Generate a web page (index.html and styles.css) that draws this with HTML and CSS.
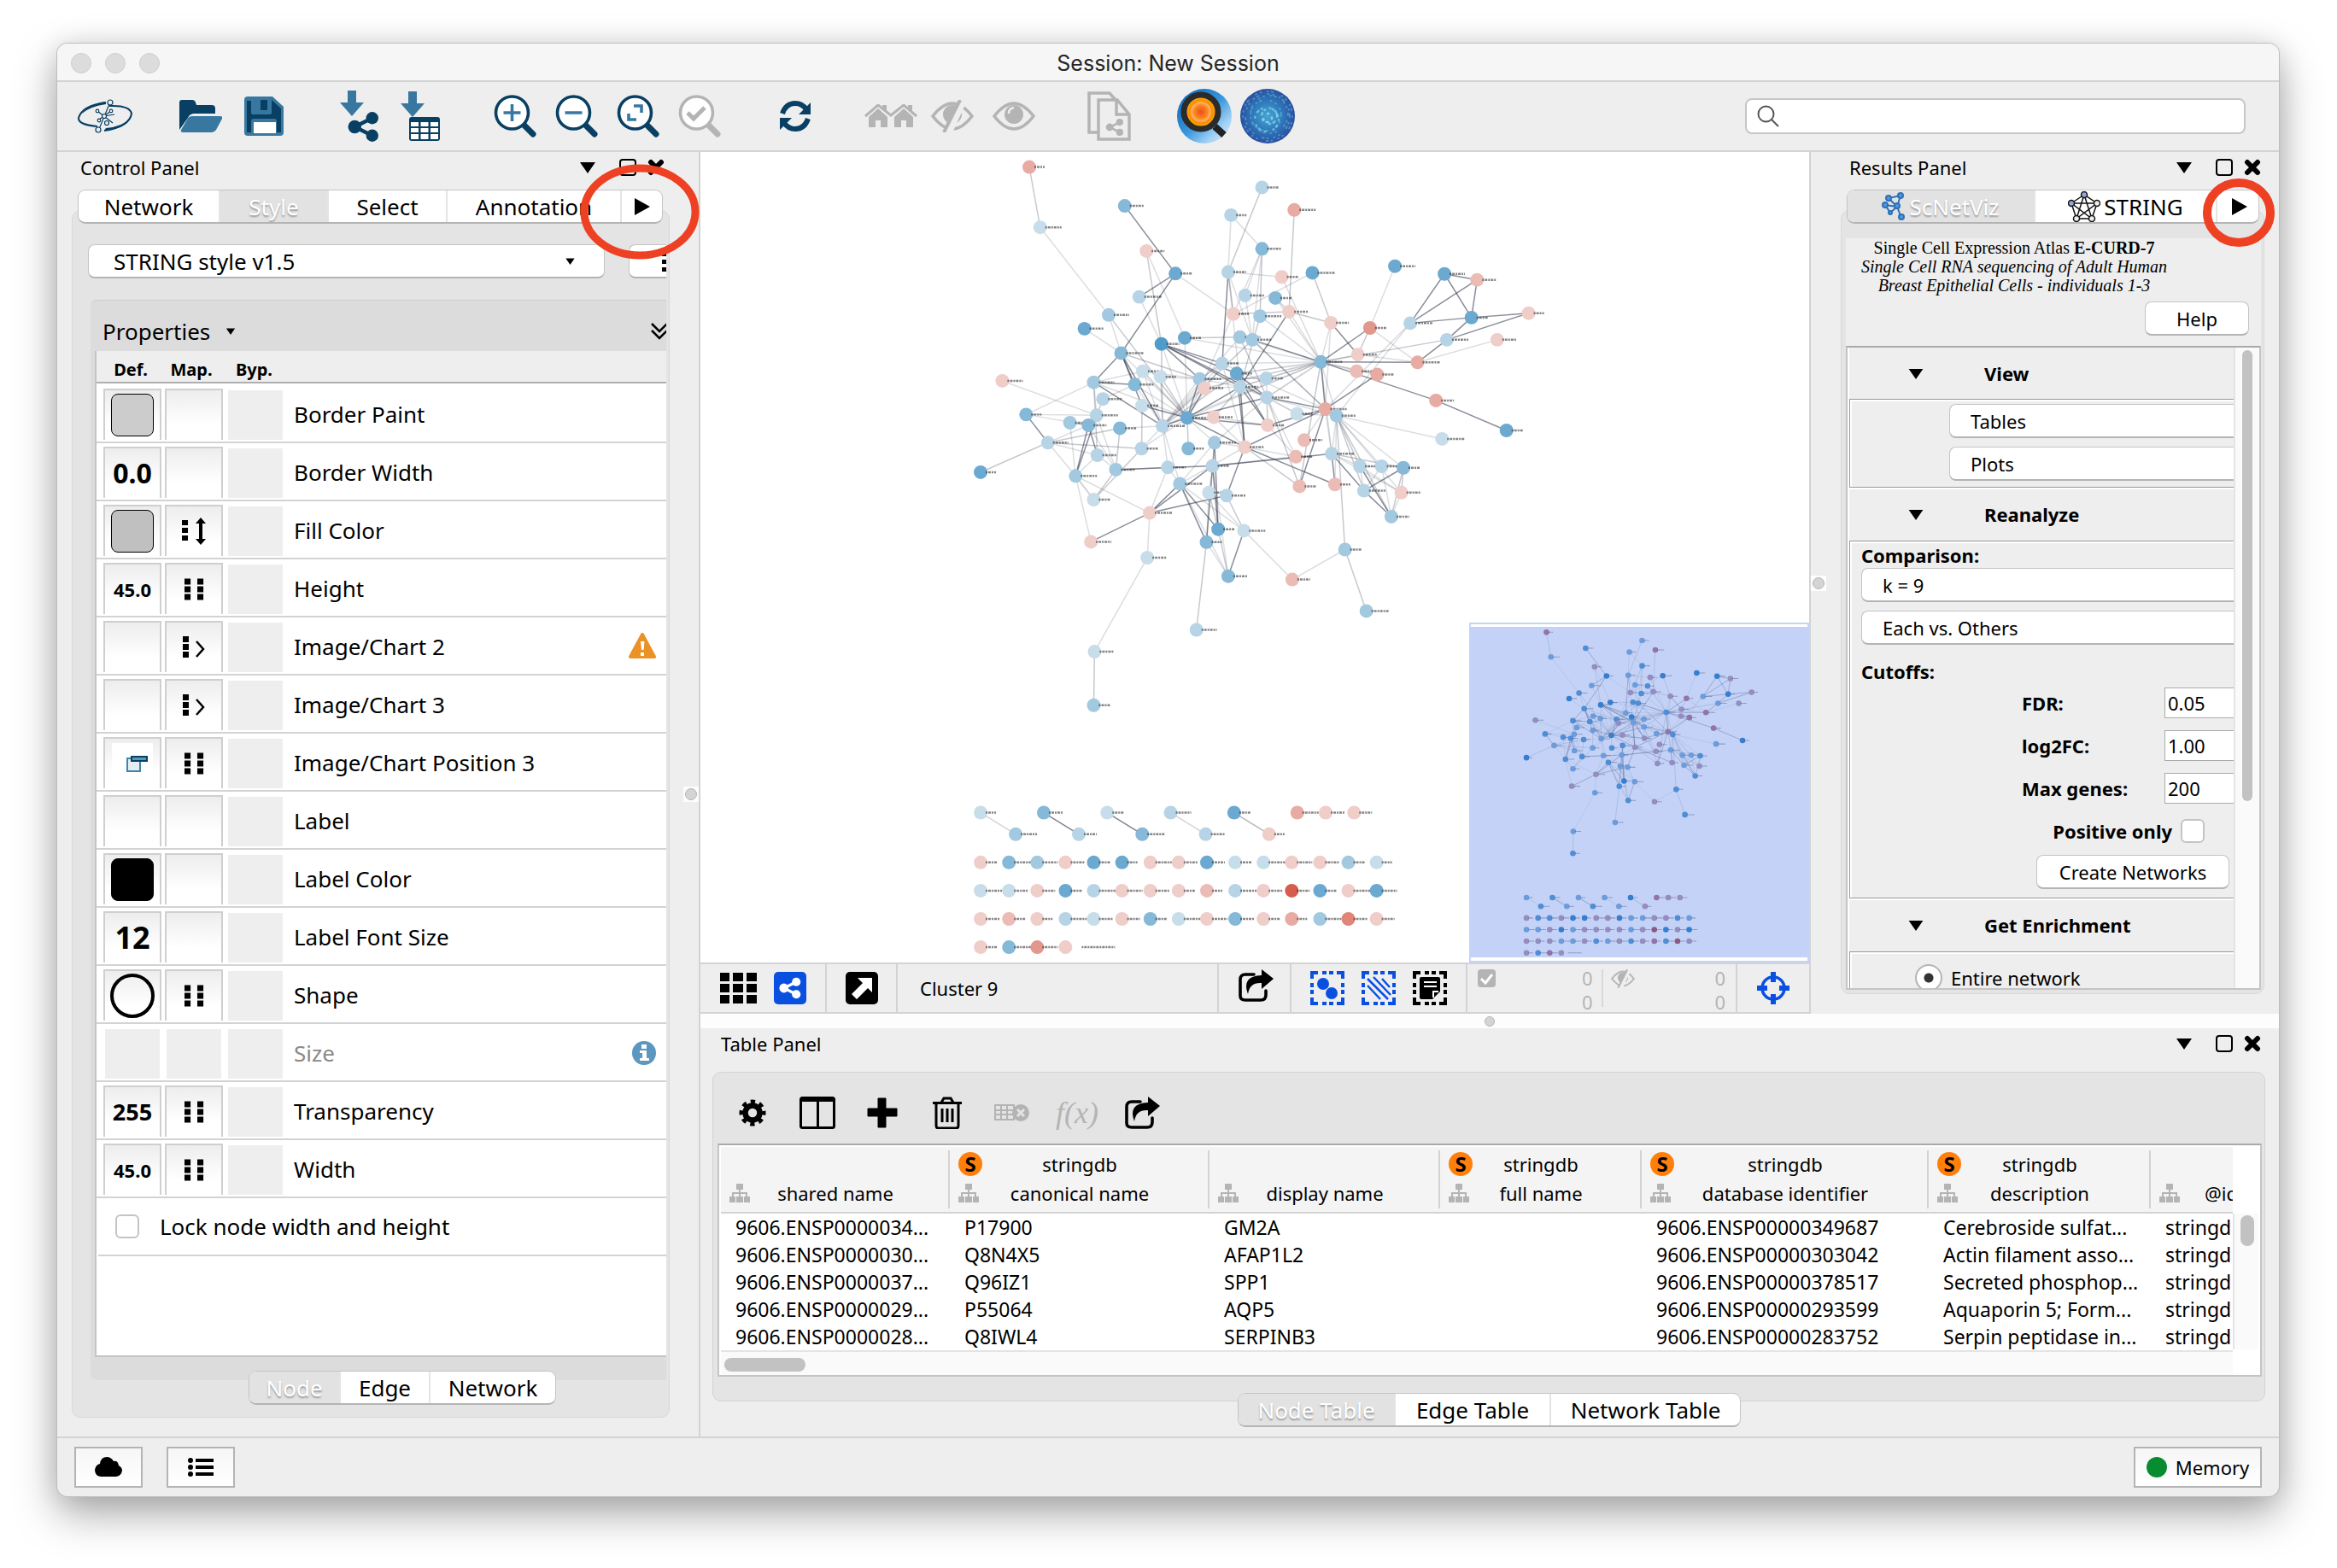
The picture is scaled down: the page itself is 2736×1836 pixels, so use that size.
FILE: index.html
```html
<!DOCTYPE html>
<html lang="en">
<head>
<meta charset="utf-8">
<title>Session: New Session</title>
<link rel="stylesheet" href="styles.css">
</head>
<body>
<svg class="defs" aria-hidden="true">
  <symbol id="i-down" viewBox="0 0 18 14"><path d="M0 1h18L9 14z"/></symbol>
  <symbol id="i-float" viewBox="0 0 20 20"><rect x="1" y="1" width="18" height="18" rx="3" fill="none" stroke="#000" stroke-width="2"/></symbol>
  <symbol id="i-close" viewBox="0 0 20 20"><path d="M4 4l12 12M16 4L4 16" stroke="#000" stroke-width="6" stroke-linecap="round"/></symbol>
  <symbol id="i-right" viewBox="0 0 18 20"><path d="M0 0l18 10L0 20z"/></symbol>
  <symbol id="i-dots2" viewBox="0 0 24 26"><path d="M4 4h.1M4 13h.1M4 22h.1M19 4h.1M19 13h.1M19 22h.1" stroke="#000" stroke-width="7" stroke-linecap="square" transform="translate(.5 0)"/></symbol>
  <symbol id="i-disc" viewBox="0 0 28 26"><path d="M1 0h7v7H1zM1 9h7v7H1zM1 18h7v7H1z"/><path d="M17 6l8 9-8 9" fill="none" stroke="#000" stroke-width="2.500"/></symbol>
  <symbol id="i-cont" viewBox="0 0 28 32"><path d="M0 3h7v6H0zM0 12h7v6H0zM0 21h7v6H0zM22 0l6 7h-4v18h4l-6 7-6-7h4V7h-4z"/></symbol>
  <symbol id="i-share" viewBox="0 0 36 34"><g fill="none" stroke="currentColor" stroke-width="4.500"><path d="M28 7L8 17l20 10"/></g><g fill="currentColor"><circle cx="28" cy="7" r="7"/><circle cx="8" cy="17" r="7.500"/><circle cx="28" cy="27" r="7"/></g></symbol>
  <symbol id="i-arrow" viewBox="0 0 28 30"><path d="M9 0h10v14h9L14 30 0 14h9z"/></symbol>
  <symbol id="i-lens" viewBox="0 0 50 50"><path d="M35 35l11 11" stroke="currentColor" stroke-width="7" stroke-linecap="round"/><circle cx="21.500" cy="21" r="19" fill="#fff" stroke="currentColor" stroke-width="3.600"/></symbol>
  <symbol id="i-export" viewBox="0 0 42 38"><path d="M19 6H9Q3 6 3 12v19q0 5 6 5h18q6 0 6-6v-5" fill="none" stroke="#000" stroke-width="3.600" stroke-linecap="round"/><path d="M28 0l14 11-14 12v-7q-14-1-16 13Q4 8 28 7z"/></symbol>
  <symbol id="i-eye" viewBox="0 0 50 34"><path d="M2 17Q25-13 48 17 25 47 2 17z" fill="none" stroke="#b4b4b4" stroke-width="3.500"/><circle cx="25" cy="15" r="11" fill="#b4b4b4"/><path d="M19 14q0-6 6-7" stroke="#eee" stroke-width="2.500" fill="none"/></symbol>
  <symbol id="i-eyeoff" viewBox="0 0 50 38"><path d="M2 19Q25-11 48 19 25 49 2 19z" fill="none" stroke="#b4b4b4" stroke-width="3.500"/><circle cx="25" cy="17" r="11" fill="#b4b4b4"/><path d="M38 0L20 40" stroke="#eee" stroke-width="8"/><path d="M34 0L15 38" stroke="#b4b4b4" stroke-width="4"/></symbol>
  <symbol id="i-tree" viewBox="0 0 24 22"><path d="M8 0h8v7h-3v3h8v5h3v7h-7v-7h2v-3h-6v3h3v7H8v-7h3v-3H5v3h2v7H0v-7h3v-5h8V7H8z" fill="#b4b4b4"/></symbol>
  <symbol id="i-dashbox" viewBox="0 0 40 40"><path d="M2 9V2h7M14 2h5M22 2h5M31 2h7v7M38 14v5M38 22v5M38 31v7h-7M27 38h-5M19 38h-5M9 38H2v-7M2 27v-5M2 19v-5" fill="none" stroke="currentColor" stroke-width="4"/></symbol>
</svg>

<div class="window">
  <header class="titlebar">
    <div class="lights"><i></i><i></i><i></i></div>
    <h1>Session: New Session</h1>
  </header>

  <div class="toolbar">
    <button class="tb tb-logo" aria-label="Cytoscape"><svg width="66" height="40" viewBox="0 0 66 40"><g fill="none" stroke="#083f63"><path d="M33 4Q6 8 2 22q-1 8 22 10" stroke-width="2"/><path d="M38 8q24-1 26 9-2 15-32 20" stroke-width="2"/><g stroke-width="1.200"><path d="M38 6L26 35M24 14l18 14M40 14L26 24M32 20l12-2"/></g></g><path d="M34 3Q12 7 6 17 14 9 34 6zM32 37q24-2 30-14-8 9-28 11z" fill="#083f63"/><g fill="#eee" stroke="#083f63" stroke-width="1.200"><circle cx="39" cy="4" r="3"/><circle cx="25" cy="36" r="3"/><circle cx="32" cy="20" r="2.500"/><circle cx="24" cy="14" r="1.800"/><circle cx="40" cy="14" r="1.800"/><circle cx="26" cy="25" r="1.800"/><circle cx="35" cy="28" r="2.500"/></g></svg></button>
    <button class="tb tb-open" aria-label="Open session"><svg width="50" height="40" viewBox="0 0 50 40"><path d="M0 36V4q0-3 3-3h12q3 0 4 3l1 3h18q4 0 4 4v6H18q-6 0-8 5z" fill="#083f63"/><path d="M15 20h33q3 0 2 3l-7 13q-2 3-5 3H4q-3 0-2-3l7-12q2-4 6-4z" fill="#3878a0"/></svg></button>
    <button class="tb" aria-label="Save session"><svg width="46" height="46" viewBox="0 0 46 46"><path d="M4 0h29l13 12v30q0 4-4 4H4q-4 0-4-4V4q0-4 4-4z" fill="#3878a0"/><path d="M3 5h5v14q0 2 2 2h20q2 0 2-2V4l11 10v28h-5V29q0-3-3-3H11q-3 0-3 3v13H3z" fill="#083f63"/><path d="M19 4h8v12h-8z" fill="#083f63"/><path d="M11 30h26v13H11z" fill="#fff"/></svg></button>
    <button class="tb tb-impnet" aria-label="Import network"><svg width="48" height="60" viewBox="0 0 48 60"><use href="#i-arrow" x="0" y="0" width="28" height="30" fill="#3878a0"/><use href="#i-share" x="9" y="25" width="37" height="35" color="#083f63"/></svg></button>
    <button class="tb" aria-label="Import table"><svg width="48" height="60" viewBox="0 0 48 60"><use href="#i-arrow" x="0" y="1" width="28" height="30" fill="#3878a0"/><rect x="10" y="31" width="36" height="28" rx="3" fill="#083f63"/><path d="M12 37h9v5h-9zM23.500 37h9v5h-9zM35 37h9v5h-9zM12 44h9v5h-9zM23.500 44h9v5h-9zM35 44h9v5h-9zM12 51h9v6h-9zM23.500 51h9v6h-9zM35 51h9v6h-9z" fill="#fff"/></svg></button>
    <button class="tb tb-zin" aria-label="Zoom in"><svg width="50" height="50" viewBox="0 0 50 50"><use href="#i-lens" color="#083f63"/><path d="M21.500 11v20M11.500 21h20" stroke="#3878a0" stroke-width="3.600"/></svg></button>
    <button class="tb" aria-label="Zoom out"><svg width="50" height="50" viewBox="0 0 50 50"><use href="#i-lens" color="#083f63"/><path d="M11.500 21h20" stroke="#3878a0" stroke-width="3.600"/></svg></button>
    <button class="tb" aria-label="Fit content"><svg width="50" height="50" viewBox="0 0 50 50"><use href="#i-lens" color="#083f63"/><path d="M20 13h9v8M14 22v7h9" fill="none" stroke="#3878a0" stroke-width="3.600"/></svg></button>
    <button class="tb" aria-label="Zoom selected"><svg width="50" height="50" viewBox="0 0 50 50"><use href="#i-lens" color="#b4b4b4"/><path d="M11 21l7 7 13-13" fill="none" stroke="#b4b4b4" stroke-width="5"/></svg></button>
    <button class="tb tb-refresh" aria-label="Apply layout"><svg width="38" height="38" viewBox="0 0 38 38"><g fill="none" stroke="#083f63" stroke-width="6"><path d="M4 16Q8 4 19 4q8 0 13 7"/><path d="M34 22q-4 12-15 12-8 0-13-7"/></g><path d="M37 3v14H23zM1 35V21h14z" fill="#083f63"/></svg></button>
    <button class="tb tb-home" aria-label="First neighbors"><svg width="62" height="28" viewBox="0 0 62 28"><g fill="#b4b4b4"><path d="M5 15l11-10 11 10v12h-8v-8h-6v8H5zM35 15L46 5l11 10v12h-8v-8h-6v8h-8zM21 1h5v8l-5-4zM51 1h5v8l-5-4z"/><path d="M1 14L16 1l15 12L46 1l15 13" fill="none" stroke="#b4b4b4" stroke-width="3"/></g></svg></button>
    <button class="tb tb-gap1" aria-label="Hide selected"><svg width="50" height="38"><use href="#i-eyeoff"/></svg></button>
    <button class="tb tb-gap2" aria-label="Show all"><svg width="50" height="34"><use href="#i-eye"/></svg></button>
    <button class="tb tb-copy" aria-label="New network from selection"><svg width="52" height="58" viewBox="0 0 52 58"><g fill="none" stroke="#b4b4b4" stroke-width="3.500"><path d="M12 48H2V2h24l7 8"/><path d="M13 10h22l14 17v29H13zM34 11v16h15"/></g><use href="#i-share" x="21" y="32" width="22" height="20" color="#b4b4b4"/></svg></button>
    <button class="tb tb-round" aria-label="Enrichment"><svg width="64" height="64" viewBox="0 0 64 64"><defs><linearGradient id="g1" x2="1" y2="1"><stop offset="0" stop-color="#0a5fb0"/><stop offset=".5" stop-color="#3a97dc"/><stop offset=".75" stop-color="#9fd0f4"/><stop offset="1" stop-color="#eef"/></linearGradient><radialGradient id="g2"><stop offset="0" stop-color="#f04a1c"/><stop offset=".4" stop-color="#f98a20"/><stop offset=".55" stop-color="#ffb066"/><stop offset=".65" stop-color="#f98a00"/><stop offset="1" stop-color="#ffc400"/></radialGradient></defs><circle cx="32" cy="32" r="32" fill="url(#g1)"/><path d="M44 44l11 10" stroke="#222" stroke-width="8"/><circle cx="28" cy="27" r="20" fill="url(#g2)" stroke="#2b2b2b" stroke-width="7"/></svg></button>
    <button class="tb tb-globe" aria-label="STRING"><svg width="64" height="64" viewBox="0 0 64 64"><defs><radialGradient id="g3"><stop offset="0" stop-color="#46a5d2"/><stop offset=".6" stop-color="#2e74b8"/><stop offset="1" stop-color="#2a4fa0"/></radialGradient></defs><circle cx="32" cy="32" r="32" fill="url(#g3)"/><g fill="none" stroke="#7fd4e8" stroke-linecap="round"><g stroke-width="2.500" stroke-dasharray="1 6 2 4 1 9"><circle cx="32" cy="34" r="5"/><circle cx="34" cy="32" r="9" opacity=".8"/><circle cx="31" cy="36" r="14" opacity=".7"/></g><g stroke-width="2" opacity=".4" stroke-dasharray="1 7 1 4 2 11 1 5"><circle cx="30" cy="31" r="18"/><circle cx="34" cy="30" r="22"/><circle cx="32" cy="32" r="26"/><circle cx="32" cy="32" r="29"/></g></g></svg></button>
    <label class="search"><svg width="26" height="26" viewBox="0 0 26 26"><g fill="none" stroke="#555" stroke-width="2"><circle cx="10.500" cy="10.500" r="9"/><path d="M17 17l8 8"/></g></svg><input type="search" aria-label="Search"></label>
  </div>

  <main class="main">
    <aside class="control">
      <div class="ptitle"><h2>Control Panel</h2><button aria-label="Menu"><svg width="18" height="14"><use href="#i-down"/></svg></button><button aria-label="Float"><svg width="20" height="20"><use href="#i-float"/></svg></button><button aria-label="Close"><svg width="20" height="20"><use href="#i-close"/></svg></button></div>
      <nav class="tabs tabs-control"><button class="w1">Network</button><button class="w2 on">Style</button><button class="w3">Select</button><button class="w4">Annotation</button><button class="w5" aria-label="More tabs"><svg width="18" height="20"><use href="#i-right"/></svg></button></nav>
      <div class="cbox">
        <div class="styler"><div class="combo"><select aria-label="Style"><option>STRING style v1.5</option></select><svg width="11" height="8"><use href="#i-down"/></svg></div><button class="opts" aria-label="Options"><svg width="5" height="26" viewBox="0 0 5 26"><path d="M0 2h5v5H0zM0 11h5v5H0zM0 20h5v5H0z"/></svg></button></div>
        <div class="props">
          <div class="phead"><h3>Properties</h3><svg width="12" height="8"><use href="#i-down"/></svg><button aria-label="Expand all"><svg width="18" height="22" viewBox="0 0 18 22"><path d="M1 2l9 9 9-9M1 10l9 9 9-9" fill="none" stroke="#000" stroke-width="2.500"/></svg></button></div>
          <div class="plist">
            <table class="ptable">
              <thead><tr><th class="cd">Def.</th><th class="cm">Map.</th><th class="cb">Byp.</th><th></th></tr></thead>
              <tbody>
                <tr><td><button class="pc" aria-label="Default"><i class="sw sw1"></i></button></td><td><button class="pc" aria-label="Mapping"></button></td><td><span class="by"></span></td><td>Border Paint</td></tr>
                <tr><td><button class="pc n1">0.0</button></td><td><button class="pc" aria-label="Mapping"></button></td><td><span class="by"></span></td><td>Border Width</td></tr>
                <tr><td><button class="pc" aria-label="Default"><i class="sw sw2"></i></button></td><td><button class="pc" aria-label="Mapping"><svg width="28" height="32"><use href="#i-cont"/></svg></button></td><td><span class="by"></span></td><td>Fill Color</td></tr>
                <tr><td><button class="pc n3">45.0</button></td><td><button class="pc" aria-label="Mapping"><svg width="24" height="26"><use href="#i-dots2"/></svg></button></td><td><span class="by"></span></td><td>Height</td></tr>
                <tr><td><button class="pc" aria-label="Default"></button></td><td><button class="pc" aria-label="Mapping"><svg width="28" height="26"><use href="#i-disc"/></svg></button></td><td><span class="by"></span></td><td><span class="nm">Image/Chart 2<svg width="32" height="32" viewBox="0 0 32 32"><path d="M16 2l14 26H2z" fill="#ea9226" stroke="#ea9226" stroke-width="4" stroke-linejoin="round"/><path d="M14 10h4.500l-1 10h-2.500zM14 23h4v4h-4z" fill="#fff"/></svg></span></td></tr>
                <tr><td><button class="pc" aria-label="Default"></button></td><td><button class="pc" aria-label="Mapping"><svg width="28" height="26"><use href="#i-disc"/></svg></button></td><td><span class="by"></span></td><td>Image/Chart 3</td></tr>
                <tr><td><button class="pc" aria-label="Default"><svg width="48" height="48" viewBox="0 0 48 48"><path d="M0 0h48v48H0z" fill="#fff"/><path d="M18 18h15v15H18z" fill="#e3edf3" stroke="#3f86ad" stroke-width="2"/><path d="M23 16h18v5H23z" fill="#5a98b8" stroke="#083f63" stroke-width="2"/></svg></button></td><td><button class="pc" aria-label="Mapping"><svg width="24" height="26"><use href="#i-dots2"/></svg></button></td><td><span class="by"></span></td><td>Image/Chart Position 3</td></tr>
                <tr><td><button class="pc" aria-label="Default"></button></td><td><button class="pc" aria-label="Mapping"></button></td><td><span class="by"></span></td><td>Label</td></tr>
                <tr><td><button class="pc" aria-label="Default"><i class="sw sw3"></i></button></td><td><button class="pc" aria-label="Mapping"></button></td><td><span class="by"></span></td><td>Label Color</td></tr>
                <tr><td><button class="pc n0">12</button></td><td><button class="pc" aria-label="Mapping"></button></td><td><span class="by"></span></td><td>Label Font Size</td></tr>
                <tr><td><button class="pc" aria-label="Default"><svg width="54" height="54"><circle cx="27" cy="27" r="24" fill="none" stroke="#000" stroke-width="4"/></svg></button></td><td><button class="pc" aria-label="Mapping"><svg width="24" height="26"><use href="#i-dots2"/></svg></button></td><td><span class="by"></span></td><td>Shape</td></tr>
                <tr class="off"><td><span class="by"></span></td><td><span class="by"></span></td><td><span class="by"></span></td><td><span class="nm">Size<svg width="28" height="28" viewBox="0 0 28 28"><circle cx="14" cy="14" r="14" fill="#5b97bf"/><path d="M11 4h6v5h-6zM9 11h8v9h3v3H9v-3h3v-6H9z" fill="#fff"/></svg></span></td></tr>
                <tr><td><button class="pc n2">255</button></td><td><button class="pc" aria-label="Mapping"><svg width="24" height="26"><use href="#i-dots2"/></svg></button></td><td><span class="by"></span></td><td>Transparency</td></tr>
                <tr><td><button class="pc n3">45.0</button></td><td><button class="pc" aria-label="Mapping"><svg width="24" height="26"><use href="#i-dots2"/></svg></button></td><td><span class="by"></span></td><td>Width</td></tr>
              </tbody>
            </table>
            <label class="lock"><input type="checkbox">Lock node width and height</label>
          </div>
        </div>
        <nav class="tabs tabs-bottom"><button class="on">Node</button><button>Edge</button><button>Network</button></nav>
      </div>
      <span class="grip grip-l"></span>
      <svg class="mark mark-l" viewBox="0 0 140 112" aria-hidden="true"><ellipse cx="70" cy="56" rx="65" ry="51" fill="none" stroke="#ee4023" stroke-width="9"/></svg>
    </aside>

    <div class="work">
      <div class="upper">
        <section class="netview">
          <div class="canvas">
            <svg class="net" viewBox="820 178 1298 950" preserveAspectRatio="xMidYMid meet"><g id="net-main"></g></svg>
            <svg class="mini" viewBox="1720 730 398 398"><path d="M1720 730h398v398h-398z" fill="#fff"/><g id="net-mini" transform="translate(1315.900 661) scale(.4105)"></g><path d="M1722 735h394v387h-394z" fill="#6289e7" opacity=".38"/><path d="M1721 731h396v396h-396z" fill="none" stroke="#c4d4f8" stroke-width="2"/></svg>
          </div>
          <div class="netbar">
            <div class="nb nb1"><button aria-label="Grid view"><svg width="44" height="36" viewBox="0 0 44 36"><path d="M1 0h11v10H1zM16 0h12v10H16zM32 0h12v10H32zM1 13h11v10H1zM16 13h12v10H16zM32 13h12v10H32zM1 26h11v10H1zM16 26h12v10H16zM32 26h12v10H32z"/></svg></button><button aria-label="Network view"><svg width="38" height="38" viewBox="0 0 38 38"><rect width="38" height="38" rx="5" fill="#0a50e0"/><use href="#i-share" x="6" y="6" width="26" height="26" color="#fff"/></svg></button></div>
            <div class="nb nb2"><button aria-label="Detach view"><svg width="38" height="38" viewBox="0 0 38 38"><rect width="38" height="38" rx="5"/><path d="M14 7h17v17l-5-5-13 13-6-6 13-13z" fill="#fff"/></svg></button></div>
            <div class="nb nb3">Cluster 9</div>
            <div class="nb nb4"><button aria-label="Export"><svg width="42" height="38"><use href="#i-export"/></svg></button></div>
            <div class="nb nb5"><button aria-label="Select nodes"><svg width="40" height="40" viewBox="0 0 40 40" color="#0a50e0"><use href="#i-dashbox"/><circle cx="15" cy="15" r="7" fill="#0a50e0"/><circle cx="25" cy="26" r="7" fill="#0a50e0"/></svg></button><button aria-label="Select edges"><svg width="40" height="40" viewBox="0 0 40 40" color="#0a50e0"><use href="#i-dashbox"/><path d="M7 17l15 16M7 9l24 24M14 7l20 21M24 9l9 10" stroke="#0a50e0" stroke-width="2.500"/></svg></button><button aria-label="Select annotations"><svg width="40" height="40" viewBox="0 0 40 40"><use href="#i-dashbox"/><path d="M10 7h20q2 0 2 2v15l-9 9H10q-2 0-2-2V9q0-2 2-2z"/><path d="M13 13h15M13 18h15M24 31v-7h6" fill="none" stroke="#fff" stroke-width="2"/></svg></button></div>
            <div class="nb nb6"><div class="cnt"><svg width="22" height="22" viewBox="0 0 22 22"><rect width="21" height="21" rx="4" fill="#b4b4b4"/><path d="M4 11l5 5 8-10" fill="none" stroke="#fff" stroke-width="3"/></svg><span>0<br>0</span></div><div class="cnt"><svg width="28" height="22"><use href="#i-eyeoff"/></svg><span>0<br>0</span></div></div>
            <div class="nb nb7"><button aria-label="Toggle navigator"><svg width="38" height="38" viewBox="0 0 38 38"><circle cx="19" cy="19" r="13" fill="none" stroke="#0a50e0" stroke-width="3.500"/><path d="M16 0h6v12h-6zM16 26h6v12h-6zM0 16h12v6H0zM26 16h12v6H26z" fill="#0a50e0"/></svg></button></div>
          </div>
        </section>

        <aside class="results">
          <div class="ptitle"><h2>Results Panel</h2><button aria-label="Menu"><svg width="18" height="14"><use href="#i-down"/></svg></button><button aria-label="Float"><svg width="20" height="20"><use href="#i-float"/></svg></button><button aria-label="Close"><svg width="20" height="20"><use href="#i-close"/></svg></button></div>
          <nav class="tabs tabs-results"><button class="r1 on"><svg width="28" height="34" viewBox="0 0 28 34"><g stroke="#2f6fb5" stroke-width="2" fill="#4a9be0"><path d="M22 4L8 7l10 10L4 15l6 9 8-7 5 13M22 4l-4 13" fill="none"/><circle cx="22" cy="4" r="3"/><circle cx="8" cy="7" r="3"/><circle cx="4" cy="15" r="3"/><circle cx="18" cy="16" r="3"/><circle cx="10" cy="24" r="2"/><circle cx="23" cy="29" r="3"/></g></svg>ScNetViz</button><button class="r2"><svg width="38" height="36" viewBox="0 0 38 36"><g stroke="#111" stroke-width="1.500"><path d="M19 4L4 14l6 18h18l6-18zM4 14h30L10 32 19 4l9 28z" fill="none"/><g fill="#eee"><circle cx="34" cy="14" r="3.500"/><circle cx="10" cy="32" r="3.500"/><circle cx="28" cy="32" r="3.500"/></g><g fill="#9aa3dc"><circle cx="19" cy="4" r="3.500"/><circle cx="4" cy="14" r="3.500"/></g></g></svg>STRING</button><button class="r3" aria-label="More tabs"><svg width="18" height="20"><use href="#i-right"/></svg></button></nav>
          <div class="rbox">
            <div class="rinner">
              <p class="intro">Single Cell Expression Atlas <b>E-CURD-7</b><br><em>Single Cell RNA sequencing of Adult Human<br>Breast Epithelial Cells - individuals 1-3</em></p>
              <button class="push help">Help</button>
              <div class="rscroll">
                <div class="rcontent">
                  <h3 class="sec sec1"><svg width="20" height="13"><use href="#i-down"/></svg>View</h3>
                  <div class="secbody sb1"><div class="push cut"><select aria-label="Tables"><option>Tables</option></select></div><div class="push cut"><select aria-label="Plots"><option>Plots</option></select></div></div>
                  <h3 class="sec"><svg width="20" height="13"><use href="#i-down"/></svg>Reanalyze</h3>
                  <div class="secbody sb2">
                    <label class="bl" for="cmp">Comparison:</label>
                    <div class="push cut"><select id="cmp"><option>k = 9</option></select></div>
                    <div class="push cut"><select aria-label="Groups"><option>Each vs. Others</option></select></div>
                    <div class="bl bl2">Cutoffs:</div>
                    <div class="fields">
                      <label for="f1">FDR:</label><input id="f1" type="text" value="0.05">
                      <label for="f2">log2FC:</label><input id="f2" type="text" value="1.00">
                      <label for="f3">Max genes:</label><input id="f3" type="text" value="200">
                    </div>
                    <label class="pos">Positive only<input type="checkbox"></label>
                    <button class="push create">Create Networks</button>
                  </div>
                  <h3 class="sec"><svg width="20" height="13"><use href="#i-down"/></svg>Get Enrichment</h3>
                  <div class="secbody"><label class="radio"><input type="radio" name="scope" checked>Entire network</label></div>
                </div>
                <div class="vbar"><i></i></div>
              </div>
            </div>
          </div>
          <span class="grip grip-r"></span>
          <svg class="mark mark-r" viewBox="0 0 84 80" aria-hidden="true"><ellipse cx="42" cy="40" rx="37" ry="35" fill="none" stroke="#ee4023" stroke-width="10"/></svg>
        </aside>
      </div>

      <div class="split"><i></i></div>

      <section class="tpanel">
        <div class="ptitle"><h2>Table Panel</h2><button aria-label="Menu"><svg width="18" height="14"><use href="#i-down"/></svg></button><button aria-label="Float"><svg width="20" height="20"><use href="#i-float"/></svg></button><button aria-label="Close"><svg width="20" height="20"><use href="#i-close"/></svg></button></div>
        <div class="tbox">
          <div class="ttools">
            <button aria-label="Settings"><svg width="32" height="32" viewBox="0 0 32 32"><circle cx="16" cy="16" r="8.500" fill="none" stroke="#000" stroke-width="6.500"/><circle cx="16" cy="16" r="13" fill="none" stroke="#000" stroke-width="5" stroke-dasharray="5.200 5.010" stroke-dashoffset="2.600"/></svg></button>
            <button aria-label="Columns"><svg width="42" height="38" viewBox="0 0 42 38"><rect x="1.500" y="1.500" width="39" height="35" rx="2" fill="none" stroke="#000" stroke-width="3"/><path d="M1 1h40v5H1zM20 5h3v32h-3z"/></svg></button>
            <button aria-label="Add column"><svg width="36" height="36" viewBox="0 0 36 36"><path d="M13 1h9v12h13v9H22v13h-9V22H1v-9h12z" stroke="#000" stroke-linejoin="round"/></svg></button>
            <button aria-label="Delete column"><svg width="36" height="38" viewBox="0 0 36 38"><g fill="none" stroke="#000" stroke-width="3"><path d="M1 7.500h34M11 7l3-5h8l3 5M5 8v26q0 3 3 3h20q3 0 3-3V8M12 14v16M18 14v16M24 14v16"/></g></svg></button>
            <button aria-label="Delete table"><svg width="42" height="20" viewBox="0 0 42 20"><path d="M1 1h22v17H1zM1 7h22M1 12h22M8 1v17M15 1v17" fill="none" stroke="#b4b4b4" stroke-width="2"/><circle cx="31" cy="10" r="10" fill="#b4b4b4"/><path d="M27 6l8 8M35 6l-8 8" stroke="#e4e4e4" stroke-width="3"/></svg></button>
            <button class="fx">f(x)</button>
            <button aria-label="Export table"><svg width="42" height="38"><use href="#i-export"/></svg></button>
          </div>
          <div class="tframe">
            <div class="tclip">
              <table class="data">
                <colgroup><col class="k1"><col class="k2"><col class="k3"><col class="k4"><col class="k5"><col class="k6"><col class="k7"></colgroup>
                <thead><tr>
                  <th><div class="h"><span></span><span></span><svg width="24" height="22"><use href="#i-tree"/></svg><span>shared name</span></div></th>
                  <th><div class="h"><b>S</b><span>stringdb</span><svg width="24" height="22"><use href="#i-tree"/></svg><span>canonical name</span></div></th>
                  <th><div class="h"><span></span><span></span><svg width="24" height="22"><use href="#i-tree"/></svg><span>display name</span></div></th>
                  <th><div class="h"><b>S</b><span>stringdb</span><svg width="24" height="22"><use href="#i-tree"/></svg><span>full name</span></div></th>
                  <th><div class="h"><b>S</b><span>stringdb</span><svg width="24" height="22"><use href="#i-tree"/></svg><span>database identifier</span></div></th>
                  <th><div class="h"><b>S</b><span>stringdb</span><svg width="24" height="22"><use href="#i-tree"/></svg><span>description</span></div></th>
                  <th><div class="h"><span></span><span></span><svg width="24" height="22"><use href="#i-tree"/></svg><span>@id</span></div></th>
                </tr></thead>
                <tbody>
                  <tr><td>9606.ENSP0000034...</td><td>P17900</td><td>GM2A</td><td></td><td>9606.ENSP00000349687</td><td>Cerebroside sulfat...</td><td>stringd</td></tr>
                  <tr><td>9606.ENSP0000030...</td><td>Q8N4X5</td><td>AFAP1L2</td><td></td><td>9606.ENSP00000303042</td><td>Actin filament asso...</td><td>stringd</td></tr>
                  <tr><td>9606.ENSP0000037...</td><td>Q96IZ1</td><td>SPP1</td><td></td><td>9606.ENSP00000378517</td><td>Secreted phosphop...</td><td>stringd</td></tr>
                  <tr><td>9606.ENSP0000029...</td><td>P55064</td><td>AQP5</td><td></td><td>9606.ENSP00000293599</td><td>Aquaporin 5; Form...</td><td>stringd</td></tr>
                  <tr><td>9606.ENSP0000028...</td><td>Q8IWL4</td><td>SERPINB3</td><td></td><td>9606.ENSP00000283752</td><td>Serpin peptidase in...</td><td>stringd</td></tr>
                </tbody>
              </table>
              <div class="hbar"><i></i></div>
            </div>
            <div class="tv"><i></i></div>
          </div>
        </div>
        <nav class="tabs tabs-table"><button class="t1 on">Node Table</button><button class="t1">Edge Table</button><button class="t2">Network Table</button></nav>
      </section>
    </div>
  </main>

  <footer class="status">
    <button aria-label="Cloud"><svg width="32" height="24" viewBox="0 0 32 24"><path d="M7 23Q0 22 0 15q1-6 6-7Q7 0 14 0q5 0 8 5 5-1 6 5 4 2 4 6-1 6-7 7z"/></svg></button>
    <button aria-label="Tasks"><svg width="30" height="22" viewBox="0 0 30 22"><path d="M9 1h21v4H9zM9 9h21v4H9zM9 17h21v4H9z"/><circle cx="3" cy="3" r="3"/><circle cx="3" cy="11" r="3"/><circle cx="3" cy="19" r="3"/></svg></button>
    <button class="mem"><i></i>Memory</button>
  </footer>
</div>
<script src="network.js"></script>
</body>
</html>
```
FILE: styles.css
```css
* { box-sizing: border-box; }
body { margin: 0; height: 100vh; padding: 51px 68px 84px 67px; display: flex; background: #fff; color: #000; font: 22px/30px "Noto Sans", sans-serif; }
button, input, select { font: inherit; color: inherit; margin: 0; padding: 0; border: 0; background: none; border-radius: 0; }
button { display: inline-flex; align-items: center; justify-content: center; white-space: nowrap; }
h1, h2, h3, p { margin: 0; font-weight: 400; font-size: inherit; }
svg { display: block; flex: none; }
select { appearance: none; outline: 0; }
.defs { position: absolute; width: 0; height: 0; }

.window { flex: 1; min-width: 0; display: flex; flex-direction: column; border-radius: 12px; background: #eee; overflow: hidden; box-shadow: 0 0 0 1px #bdbdbd, 0 20px 50px rgba(0, 0, 0, .35), 0 0 30px rgba(0, 0, 0, .1); }
.titlebar { position: relative; height: 45px; flex: none; background: #f6f6f6; border-bottom: 2px solid #d3d3d3; display: flex; align-items: center; justify-content: center; padding-top: 2px; }
.titlebar h1 { font: 25px/40px Inter, sans-serif; color: #262626; }
.lights { position: absolute; left: 16px; top: 11px; display: flex; gap: 16px; }
.lights i { width: 24px; height: 24px; border-radius: 50%; background: #dcdcdc; border: 1px solid #cecece; }

.toolbar { height: 82px; flex: none; border-bottom: 2px solid #d3d3d3; display: flex; align-items: center; padding: 0 39px 0 23px; }
.tb-open { margin: 0 26px 0 54px; }
.tb-impnet { margin: 0 23px 0 66px; }
.tb-zin { margin-left: 61px; }
.tb-zin, .tb-zin ~ .tb:nth-child(-n+8) { margin-right: 22px; }
.tb-refresh { margin-left: 68px; }
.tb-home { margin-left: 62px; }
.tb-gap1 { margin-left: 16px; }
.tb-gap2 { margin-left: 22px; }
.tb-copy { margin-left: 61px; }
.tb-round { margin-left: 53px; }
.tb-globe { margin-left: 10px; }
.search { margin-left: auto; width: 586px; height: 42px; border: 2px solid #c6c6c6; border-radius: 8px; background: #fff; display: flex; align-items: center; padding: 0 12px; gap: 12px; }
.search input { flex: 1; outline: 0; min-width: 0; }

.main { flex: 1; min-height: 0; display: flex; }
.ptitle { height: 36px; flex: none; display: flex; align-items: center; }
.ptitle h2 { flex: 1; }
.ptitle button:nth-of-type(1) { margin-right: 28px; }
.ptitle button:nth-of-type(2) { margin-right: 13px; }

.tabs { position: relative; z-index: 1; display: flex; width: max-content; height: 40px; flex: none; border: 1px solid #c4c4c4; border-bottom: 2px solid #b4b4b4; border-radius: 9px; background: #fff; overflow: hidden; font-size: 26px; }
.tabs button { border-left: 2px solid #e4e4e4; }
.tabs button:first-child { border-left: 0; }
.tabs .on { background: #e2e2e2; color: #fff; text-shadow: 0 2px 2px #999; }

.control { position: relative; width: 753px; flex: none; border-right: 2px solid #d3d3d3; display: flex; flex-direction: column; }
.control .ptitle { padding: 0 40px 0 27px; }
.tabs-control { margin: 8px 0 0 24px; }
.w1 { width: 164px; } .w2 { width: 127px; } .w3 { width: 139px; } .w4 { width: 204px; } .w5 { width: 49px; }
.cbox { flex: 1; min-height: 0; margin: -16px 34px 22px 17px; padding: 39px 3px 14px 18px; border: 1px solid #d8d8d8; border-radius: 10px; background: #e4e4e4; display: flex; flex-direction: column; }
.styler { display: flex; gap: 28px; overflow: hidden; height: 42px; flex: none; }
.combo { flex: 1; height: 40px; display: flex; align-items: center; padding-right: 34px; background: #fff; border: 1px solid #c4c4c4; border-bottom: 2px solid #b4b4b4; border-radius: 8px; }
.combo select { flex: 1; height: 37px; padding-left: 29px; font-size: 26px; line-height: 36px; }
.opts { width: 44px; height: 40px; background: #fff; border: 1px solid #c4c4c4; border-right: 0; border-bottom: 2px solid #b4b4b4; border-radius: 8px 0 0 8px; justify-content: flex-end; }
.props { flex: 1; min-height: 0; margin: 23px 0 0 3px; padding: 0 0 27px 5px; background: #dcdcdc; border: solid #cdcdcd; border-width: 1px 0 0; border-radius: 8px 0 0 8px; display: flex; flex-direction: column; }
.phead { height: 59px; display: flex; align-items: center; padding: 12px 0 0 9px; gap: 18px; flex: none; }
.phead h3 { font-size: 26px; }
.phead button { margin-left: auto; }
.plist { flex: 1; min-height: 0; background: #fff; border-left: 2px solid #c4c4c4; border-bottom: 2px solid #c4c4c4; overflow: hidden; }
.ptable { width: 100%; border-collapse: separate; border-spacing: 0; table-layout: fixed; font-size: 26px; }
.ptable th { height: 38px; padding: 8px 0 0; background: #eee; border-bottom: 2px solid #b0b0b0; font-size: 20px; line-height: 26px; font-weight: 700; }
.cd { width: 80px; } .cm { width: 74px; } .cb { width: 77px; }
.ptable th.cb { padding-right: 16px; }
.ptable th.cm { padding-right: 12px; }
.ptable td { height: 68px; padding: 4px 0 2px; border-bottom: 2px solid #d3d3d3; vertical-align: top; }
.ptable tbody tr:first-child td { height: 70px; padding-top: 6px; }
.ptable td:first-child { padding-left: 8px; }
.ptable td:last-child { vertical-align: middle; }
.pc { display: flex; width: 68px; height: 60px; border: 2px solid #cfcfcf; border-bottom: 0; background: linear-gradient(#ededed, #fff 70%); font-weight: 700; }
.n0 { font-size: 36px; } .n1 { font-size: 32px; } .n2 { font-size: 27px; } .n3 { font-size: 22px; }
.sw { width: 50px; height: 50px; border: 1px solid #000; border-radius: 8px; }
.sw1 { background: #ccc; } .sw2 { background: #c0c0c0; } .sw3 { background: #000; }
.by { display: block; width: 64px; height: 58px; margin: 2px 0 0; background: #eee; }
.off { color: #8a8a8a; }
.off td:nth-child(-n+2) .by { margin-left: 2px; }
.nm { display: flex; justify-content: space-between; align-items: center; padding-right: 12px; }
.lock { display: flex; align-items: center; height: 68px; margin-left: 2px; padding-left: 20px; gap: 24px; border-bottom: 2px solid #d3d3d3; font-size: 26px; }
input[type=checkbox] { appearance: none; width: 28px; height: 28px; border: 2px solid #c4c4c4; border-radius: 6px; background: #fff; }
.tabs-bottom { margin: -11px auto 0 188px; }
.tabs-bottom button { width: 105px; }
.tabs-bottom button:last-child { width: 148px; }
.grip { position: absolute; width: 18px; height: 18px; background: #fdfdfd; display: grid; place-items: center; }
.grip::after, .split i { content: ""; width: 12px; height: 12px; border-radius: 50%; background: #d4d4d4; border: 1px solid #b4b4b4; }
.grip-l { right: 0; top: calc(50% - 9px); }
.grip-r { left: 0; top: calc(50% - 9px); }
.mark { position: absolute; z-index: 2; }
.mark-l { left: 612px; top: 14px; width: 140px; height: 112px; }
.mark-r { right: 5px; top: 31px; width: 84px; height: 80px; }

.work { flex: 1; min-width: 0; min-height: 0; display: flex; flex-direction: column; }
.upper { flex: 1; min-height: 0; display: flex; }
.netview { flex: 1; min-width: 0; display: flex; flex-direction: column; background: #fff; border-right: 2px solid #d3d3d3; }
.canvas { position: relative; flex: 1; min-height: 0; }
.net { position: absolute; width: 100%; height: 100%; }
.mini { position: absolute; right: 0; bottom: 0; width: 398px; height: 398px; }
.netbar { height: 60px; flex: none; display: flex; background: #eee; border-top: 2px solid #d3d3d3; border-bottom: 2px solid #d3d3d3; }
.nb { display: flex; align-items: center; border-right: 2px solid #d3d3d3; }
.nb1 { width: 148px; padding-left: 22px; gap: 20px; } .nb2 { width: 83px; padding-left: 22px; }
.nb3 { flex: 1; padding-left: 26px; }
.nb4 { width: 85px; padding: 0 0 6px 22px; } .nb5 { width: 206px; justify-content: center; gap: 20px; }
.nb6 { width: 316px; padding: 4px 0; color: #b4b4b4; } .nb7 { width: 84px; justify-content: center; border: 0; }
.cnt { flex: 1; height: 44px; padding: 0 10px 0 12px; display: flex; justify-content: space-between; }
.cnt + .cnt { border-left: 2px solid #d8d8d8; padding: 0 12px 0 9px; }
.cnt span { line-height: 28px; margin-top: -4px; }

.results { position: relative; width: 548px; flex: none; display: flex; flex-direction: column; }
.results .ptitle { padding: 0 21px 0 45px; }
.tabs-results { margin: 8px 0 0 42px; }
.tabs-results button { gap: 4px; }
.r1 { width: 218px; } .r2 { width: 213px; } .r3 { width: 50px; padding-left: 4px; }
.rbox { flex: 1; min-height: 0; margin: -16px 17px 23px 35px; padding: 32px 3px 4px 5px; border: 1px solid #d8d8d8; border-radius: 10px; background: #e4e4e4; }
.rinner { height: 100%; display: flex; flex-direction: column; background: #eee; }
.intro { width: 394px; flex: none; font: 20px/22px "Liberation Serif", serif; text-align: center; white-space: nowrap; }
.push { height: 40px; background: #fff; border: 1px solid #c4c4c4; border-bottom: 2px solid #b4b4b4; border-radius: 8px; }
.help { width: 122px; align-self: flex-end; margin: 8px 14px 12px 0; flex: none; }
.rscroll { flex: 1; min-height: 0; display: flex; overflow: hidden; border: 2px solid #c4c4c4; border-top-color: #aaa; background: #fff; padding-left: 2px; }
.rcontent { flex: 1; min-width: 0; overflow: hidden; background: #eee; }
.sec { height: 62px; display: flex; align-items: center; gap: 70px; padding-left: 68px; font-weight: 700; }
.sec1 { height: 60px; }
.secbody { border: 1px solid #999; border-right: 0; box-shadow: inset 2px 2px #fff, 0 2px #fff; display: flex; flex-direction: column; }
.sb1 { padding: 5px 0 7px 116px; gap: 10px; }
.cut { border-right: 0; border-radius: 8px 0 0 8px; flex: none; }
.cut select { width: 100%; height: 37px; padding-left: 24px; }
.sb2 { padding: 1px 0 10px 13px; }
.bl { font-weight: 700; }
.sb2 .cut + .cut { margin-top: 10px; }
.bl2 { margin: 16px 0 4px; }
.fields { display: grid; grid-template-columns: 167px 1fr; row-gap: 14px; padding-left: 188px; align-items: center; font-weight: 700; }
.fields input { width: 100%; min-width: 0; height: 36px; background: #fff; border: 1px solid #aaa; border-right: 0; padding-left: 3px; font-weight: 400; }
.pos { height: 36px; margin: 14px 34px 10px 0; display: flex; align-items: center; justify-content: flex-end; gap: 10px; font-weight: 700; }
.create { width: 226px; align-self: flex-end; margin-right: 5px; }
.radio { display: flex; align-items: center; gap: 10px; padding: 14px 0 14px 76px; }
.radio input { appearance: none; width: 32px; height: 32px; border: 2px solid #b4b4b4; border-radius: 50%; background: radial-gradient(circle, #333 5px, #fff 6px); }
.vbar { width: 30px; padding: 3px 8px; background: #fafafa; border-left: 2px solid #e4e4e4; }
.vbar i { display: block; height: 71%; border-radius: 8px; background: #c2c2c2; }

.split { height: 17px; flex: none; background: #fdfdfd; display: grid; place-items: center; }
.tpanel { flex: none; min-width: 0; padding-bottom: 11px; }
.tpanel .ptitle { padding: 0 21px 0 24px; margin-bottom: 15px; }
.tbox { height: 386px; margin: 0 16px 0 14px; padding: 0 3px 28px 5px; border: 1px solid #d3d3d3; border-radius: 10px; background: #e4e4e4; display: flex; flex-direction: column; }
.ttools { height: 83px; flex: none; display: flex; align-items: center; padding: 10px 0 0 20px; gap: 34px; }
.ttools button { width: 42px; height: 40px; }
.ttools .fx { color: #b4b4b4; font: italic 36px/40px "Liberation Serif", serif; }
.tframe { flex: 1; min-height: 0; display: flex; background: #fff; border: 2px solid #c4c4c4; border-top-color: #aaa; padding: 2px 2px 0; }
.tclip { flex: 1; min-width: 0; overflow: hidden; display: flex; flex-direction: column; }
.data { width: 100%; min-width: 1772px; table-layout: fixed; border-collapse: separate; border-spacing: 0; }
.k1 { width: 268px; } .k2 { width: 304px; } .k3 { width: 270px; } .k4 { width: 236px; } .k5 { width: 336px; } .k6 { width: 260px; }
.data th { height: 78px; padding: 4px 0; background: #f4f4f4; border-bottom: 2px solid #d3d3d3; font-weight: 400; }
.h { height: 68px; padding: 0 8px 0 10px; border-right: 2px solid #d3d3d3; display: grid; grid-template-columns: 28px 1fr 28px; grid-template-rows: 32px 36px; align-items: center; white-space: nowrap; }
.h > :nth-child(odd) { grid-column: 1; }
.h > :nth-child(even) { grid-column: 2; }
.data th:last-child .h { border: 0; grid-template-columns: 28px 1fr; padding-right: 0; }
.data th:last-child .h span:last-child { padding-left: 25px; text-align: left; }
.h b { width: 28px; height: 28px; border-radius: 50%; background: #ff7f0a; line-height: 28px; font-size: 24px; font-weight: 700; }
.data td { height: 32px; padding: 0 0 0 17px; line-height: 32px; white-space: nowrap; overflow: hidden; font-size: 23px; }
.hbar { height: 32px; margin-top: auto; background: #fafafa; border-top: 2px solid #e4e4e4; padding: 7px 4px; }
.hbar i { display: block; width: 95px; height: 16px; border-radius: 8px; background: #c2c2c2; }
.tv { width: 30px; margin: 78px 0 30px; padding: 2px 7px; background: #fafafa; border-left: 2px solid #e4e4e4; }
.tv i { display: block; height: 36px; width: 16px; border-radius: 8px; background: #c2c2c2; }
.tabs-table { margin: -10px auto 0 629px; }
.t1 { width: 182px; } .t2 { width: 223px; }

.status { height: 70px; flex: none; border-top: 2px solid #d3d3d3; display: flex; align-items: flex-start; gap: 28px; padding: 10px 20px; }
.status button { width: 80px; height: 48px; border: 2px solid #b4b4b4; background: linear-gradient(#f6f6f6, #fff); }
.status .mem { width: 150px; margin-left: auto; gap: 10px; }
.mem i { width: 24px; height: 24px; border-radius: 50%; background: #078c32; }
```
FILE: network.js
```js
// Node shades: a-f are increasingly blue, p-u increasingly red.
const SHADES = { a: "#c7dde9", b: "#b7d4e6", c: "#a2c9e0", d: "#86b8d7", e: "#6ca9d1", f: "#4f9bca", p: "#efcdc9", q: "#ebbcb6", r: "#e7aba4", s: "#e2978d", t: "#d75c4d", u: "#e08577" };

// The connected component: x, y, shade.
const CORE = `222,59r 249,222a 459,164d 513,286p 585,347e 495,410b 419,459c 359,496e 800,114b 723,189b
880,175r 800,280d 716,343b 849,356p 925,345e 1130,327e 758,406b 833,413d 729,456p 795,462c
867,450p 971,480p 1068,494s 1168,481b 1253,348e 1334,364q 1320,466e 1462,454p 1259,526b 1384,526p
550,537f 608,521e 450,562d 745,519c 776,526c 701,590b 737,617e 946,586d 1038,566p 1035,611q
1086,620r 1186,587r 382,641c 484,647d 504,611a 548,626a 645,632c 657,657p 746,653b 811,630b
812,682b 155,637p 405,686b 502,704a 214,728d 389,730b 323,750c 369,757d 447,765d 553,759b
614,737e 680,735p 814,757p 887,726a 957,713r 985,731c 1232,690r 1407,771e 1247,794a 268,804b
391,838b 501,820b 617,820d 682,804c 757,816p 905,797q 884,842q 973,834b 1043,868b 1097,868b
1151,872d 101,884e 337,894c 437,877c 566,871b 677,867b 596,915c 668,939a 712,947b 893,922q
981,917q 1053,934b 1146,939p 1121,1004c 382,958a 521,994p 375,1072p 515,1115a 691,1038e 662,1073d
755,1042a 716,1165d 875,1174q 1006,1093c 1059,1259c 637,1310b 384,1369a 382,1514c`
  .split(/\s+/).map(s => [1100 + parseInt(s) / 2.119, 170 + parseInt(s.split(",")[1]) / 2.306, s.slice(-1)]);

const STRONG = `2-4 4-5 4-32 12-35 24-23 24-26 24-25 25-26 25-23 26-23 26-27 27-28 26-28 28-41 41-37 21-38 22-37 37-66
66-67 32-42 32-59 32-43 32-53 42-59 54-69 82-57 82-55 30-48 30-36 30-35 30-50 34-37 20-48 48-62 36-62 48-74 36-74
60-59 60-50 60-46 60-47 60-48 60-74 62-60 64-74 62-64 74-90 64-89 77-90 37-64 50-64 36-50 83-85 85-77 73-98 73-99
85-98 86-99 86-98 95-88 95-96 95-86 95-85 100-101 74-88 91-80 78-93 91-93 77-91 40-64 30-46 53-60 42-43 57-70`;
const WEAK = `0-1 1-6 3-31 3-30 5-30 6-32 6-60 7-32 4-18 8-12 9-11 9-12 10-20 11-16 11-18 11-19 11-34 12-13 12-18 12-34 13-37
14-21 14-18 15-22 17-20 17-37 16-34 18-20 19-37 20-37 20-21 21-37 21-64 22-38 23-65 23-64 28-37 29-41 22-41 31-33
33-37 35-37 36-37 48-37 49-37 50-37 60-37 59-37 47-37 38-37 39-37 40-37 38-41 37-65 37-89 37-77 31-60 30-59 30-60
32-60 32-46 42-44 42-55 42-70 42-54 42-60 43-44 44-59 44-46 44-60 45-59 45-46 45-60 46-59 46-48 46-35 47-48 47-59
48-50 49-50 49-48 49-46 51-55 52-43 52-55 54-55 54-57 56-57 56-82 57-69 69-58 69-70 69-82 69-81 57-83 55-83 58-83
58-59 59-71 53-71 59-86 59-84 60-72 60-73 60-71 61-48 61-62 61-74 50-62 50-73 50-76 50-89 62-76 63-65 63-50 64-75
64-35 64-34 64-77 65-77 65-78 65-79 65-80 65-91 65-92 65-68 65-103 65-90 65-50 65-93 74-76 74-73 74-89 74-86 73-86
76-85 77-78 77-92 77-80 78-92 79-93 80-93 78-79 78-91 80-92 79-91 92-93 82-94 82-96 82-95 83-94 83-84 84-95 71-94
70-82 70-83 69-71 84-86 85-87 87-98 87-99 87-100 88-100 86-100 86-101 98-101 99-101 85-101 99-105 95-97 97-106
106-107 100-102 102-103 103-104 31-37 33-59 34-59 35-59 35-60 36-59 35-74 12-48 19-48 18-60 34-64 33-50 43-60 43-59`;
const pairs = s => s.trim().split(/\s+/).map(e => e.split("-").map(Number));

// Small components and singletons laid out in rows under the core.
const nodes = [...CORE];
const place = (x, y, c) => nodes.push([1100 + x / 2.703, 930 + y / 3, c]) - 1;
const dyads = [];
[[129, "a", "c", .2], [329, "d", "b", .6], [530, "a", "d", .6], [731, "b", "b", .2], [932, "e", "p", .35]].forEach(([x, c1, c2, o]) => {
  dyads.push([place(x, 67, c1), place(x + 111, 143, c2), o]);
});
place(1132, 67, "r"); place(1222, 67, "p"); place(1312, 67, "p");
["pdcpeeppeaappca", "aapebpppqbptepe", "pqpbapdapdprcup", "pdsp"].forEach((row, r) => {
  [...row].forEach((c, i) => place(129 + 89.6 * i, 242 + 99.4 * r, c));
});

const line = (a, b, o) => `<path d="M${nodes[a][0]} ${nodes[a][1]}L${nodes[b][0]} ${nodes[b][1]}" stroke="#2c3348" stroke-width="1.500" opacity="${o}"/>`;
let out = "";
pairs(WEAK).forEach(([a, b], i) => { out += line(a, b, i % 3 ? .16 : .26); });
pairs(STRONG).forEach(([a, b]) => { out += line(a, b, .55); });
dyads.forEach(([a, b, o]) => { out += line(a, b, o); });
nodes.forEach(([x, y, c], i) => {
  out += `<circle cx="${x}" cy="${y}" r="8" fill="${SHADES[c]}"/>`;
  const start = i === nodes.length - 1 ? 19 : 6;
  const len = i === nodes.length - 1 ? 39 : 12 + (i * 7) % 9;
  out += `<path d="M${x + start} ${y}h${len}" stroke="#222" stroke-width="2.500" stroke-dasharray="2 1 3 1" opacity=".55"/>`;
});
document.getElementById("net-main").innerHTML = out;
// The overview keeps its nodes saturated so that they read through the tinted viewport.
document.getElementById("net-mini").innerHTML = out
  .replace(/#c7dde9|#b7d4e6/g, "#73a9d6").replace(/#a2c9e0|#86b8d7/g, "#4590cb").replace(/#6ca9d1|#4f9bca/g, "#1c78c0")
  .replace(/#efcdc9|#ebbcb6/g, "#b58fa6").replace(/#e7aba4|#e2978d/g, "#b0687f").replace(/#d75c4d|#e08577/g, "#a83a4a");
```
